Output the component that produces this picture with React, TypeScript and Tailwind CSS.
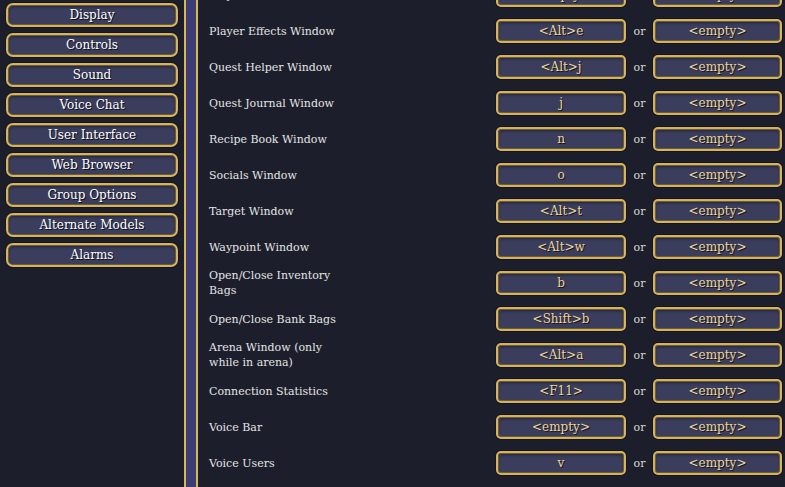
import React from "react";

const categories = [
  "Display",
  "Controls",
  "Sound",
  "Voice Chat",
  "User Interface",
  "Web Browser",
  "Group Options",
  "Alternate Models",
  "Alarms",
];

const binds: [string, string, string][] = [
  ["Player Buffs Window", "<empty>", "<empty>"],
  ["Player Effects Window", "<Alt>e", "<empty>"],
  ["Quest Helper Window", "<Alt>j", "<empty>"],
  ["Quest Journal Window", "j", "<empty>"],
  ["Recipe Book Window", "n", "<empty>"],
  ["Socials Window", "o", "<empty>"],
  ["Target Window", "<Alt>t", "<empty>"],
  ["Waypoint Window", "<Alt>w", "<empty>"],
  ["Open/Close Inventory Bags", "b", "<empty>"],
  ["Open/Close Bank Bags", "<Shift>b", "<empty>"],
  ["Arena Window (only while in arena)", "<Alt>a", "<empty>"],
  ["Connection Statistics", "<F11>", "<empty>"],
  ["Voice Bar", "<empty>", "<empty>"],
  ["Voice Users", "v", "<empty>"],
];

const frame =
  "border-2 border-[#d4b460] bg-[#3b3d5d] shadow-[inset_0_0_0_1px_#6e5c2c,inset_0_2px_3px_#23243a,0_0_0_1px_#15161f]";

function KeyButton({ label }: { label: string }) {
  return (
    <div
      className={`${frame} flex h-[24px] items-center justify-center rounded-[5px] text-[12px] leading-none text-[#ecd695] [text-shadow:1px_1px_0_#15151f]`}
    >
      {label}
    </div>
  );
}

export default function App() {
  return (
    <div
      className="flex h-[487px] w-[785px] overflow-hidden bg-[#1c1f2b] text-white"
      style={{ fontFamily: '"DejaVu Serif", "Liberation Serif", serif' }}
    >
      <div className="flex w-[184px] shrink-0 flex-col gap-[6px] pl-[6px] pr-[6px] pt-[3px]">
        {categories.map((c) => (
          <div
            key={c}
            className={`${frame} flex h-[24px] items-center justify-center rounded-[7px] text-[12px] leading-none text-white [text-shadow:1px_1px_0_#101018]`}
          >
            {c}
          </div>
        ))}
      </div>

      <div className="flex w-[14px] shrink-0 border-x-2 border-[#d9b650] bg-[#3d3c74]" />

      <div className="flex flex-1 flex-col pl-[11px]">
        <div className="mt-[-23px] flex flex-col">
          {binds.map(([name, a, b]) => (
            <div key={name} className="flex h-[36px] items-center">
              <div className="w-[287px] shrink-0">
                <div className="w-[128px] text-[11px] leading-[15px] text-[#e4e4e4]">{name}</div>
              </div>
              <div className="w-[130px] shrink-0">
                <KeyButton label={a} />
              </div>
              <div className="w-[27px] shrink-0 pt-[2px] text-center text-[11px] text-[#d8d8d8]">or</div>
              <div className="w-[129px] shrink-0">
                <KeyButton label={b} />
              </div>
            </div>
          ))}
        </div>
      </div>
    </div>
  );
}
